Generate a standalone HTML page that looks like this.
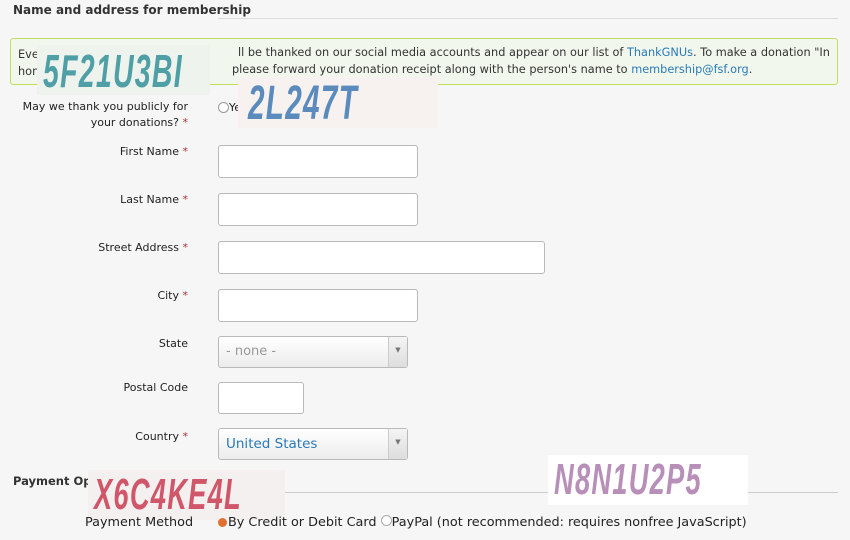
<!DOCTYPE html>
<html><head><meta charset="utf-8"><style>
body{margin:0;width:850px;height:540px;background:#f6f6f6;font-family:"DejaVu Sans","Liberation Sans",sans-serif;color:#222;overflow:hidden;position:relative}
.a{position:absolute}
.h{font-size:12px;font-weight:bold;color:#333}
.lbl{position:absolute;right:662px;font-size:11px;text-align:right;color:#222;line-height:16px}
.req{color:#a33}
.in{position:absolute;left:218px;height:31px;background:#fff;border:1px solid #b9b9b9;border-radius:3px}
.sel{position:absolute;left:218px;height:30px;border:1px solid #b9b9b9;border-radius:3px;background:linear-gradient(#fff,#ececec);font-size:13px;line-height:30px;padding-left:7px;box-sizing:border-box}
.sel b{position:absolute;right:0;top:0;width:18px;height:100%;border-left:1px solid #ccc;background:linear-gradient(#f4f4f4,#ddd);font-size:7px;color:#777;text-align:center;font-weight:normal;line-height:26px}
.cap{position:absolute;overflow:hidden}
.cap span{position:absolute;left:6px;top:3px;font-family:"Liberation Sans",sans-serif;font-weight:bold;font-style:italic;letter-spacing:2px;line-height:1;transform:scaleX(0.62);transform-origin:0 0;white-space:nowrap}
</style></head><body>
<div class="a h" style="left:13px;top:3px">Name and address for membership</div>
<div class="a" style="left:218px;top:18px;width:620px;height:1px;background:#ddd"></div>
<div class="a" style="left:10px;top:38px;width:826px;height:45px;border:1px solid #c4dd5a;border-radius:3px;background:#f1f7ec"></div>
<div class="a" style="left:18px;top:46px;font-size:11.3px;line-height:17px;color:#333;white-space:nowrap">Eve<br>hon</div>
<div class="a" style="left:238px;top:46px;font-size:11.3px;color:#333;white-space:nowrap">ll be thanked on our social media accounts and appear on our list of <span style="color:#2a7ab8">ThankGNUs</span>. To make a donation "In</div>
<div class="a" style="left:232px;top:63px;font-size:11.3px;color:#333;white-space:nowrap">please forward your donation receipt along with the person's name to <span style="color:#2a7ab8">membership@fsf.org</span>.</div>
<div class="cap" style="left:37px;top:45px;width:173px;height:50px;background:#eef3ee;color:#4e9fa6"><span style="font-size:46px">5F21U3BI</span></div>
<div class="lbl" style="top:99px">May we thank you publicly for<br>your donations? <span class="req">*</span></div>
<div class="a" style="left:218px;top:102px;width:9px;height:9px;border:1px solid #999;border-radius:50%;background:#fff"></div>
<div class="a" style="left:229px;top:101px;font-size:11px">Ye</div>
<div class="cap" style="left:238px;top:77px;width:200px;height:51px;background:#f7f2f0;color:#5b8bbd"><span style="font-size:48px;left:10px">2L247T</span></div>

<div class="lbl" style="top:144px">First Name <span class="req">*</span></div>
<div class="in" style="top:145px;width:198px"></div>
<div class="lbl" style="top:192px">Last Name <span class="req">*</span></div>
<div class="in" style="top:193px;width:198px"></div>
<div class="lbl" style="top:240px">Street Address <span class="req">*</span></div>
<div class="in" style="top:241px;width:325px"></div>
<div class="lbl" style="top:288px">City <span class="req">*</span></div>
<div class="in" style="top:289px;width:198px"></div>
<div class="lbl" style="top:336px">State</div>
<div class="sel" style="top:336px;width:190px;height:32px;color:#999">- none -<b>▼</b></div>
<div class="lbl" style="top:380px">Postal Code</div>
<div class="in" style="top:382px;width:84px;height:30px"></div>
<div class="lbl" style="top:429px">Country <span class="req">*</span></div>
<div class="sel" style="top:428px;width:190px;height:32px;color:#2a7ab8;font-size:13.5px">United States<b>▼</b></div>

<div class="a h" style="left:13px;top:474px;font-size:11.5px">Payment Opt</div>
<div class="a" style="left:285px;top:492px;width:553px;height:1px;background:#ccc"></div>
<div class="cap" style="left:88px;top:470px;width:197px;height:50px;background:#f4f0f0;color:#d0566a"><span style="font-size:44px">X6C4KE4L</span></div>
<div class="cap" style="left:548px;top:455px;width:200px;height:50px;background:#fff;color:#b78fb8"><span style="font-size:44px">N8N1U2P5</span></div>
<div class="a" style="left:85px;top:515px;font-size:12.8px;color:#222">Payment Method</div>
<div class="a" style="left:218px;top:518px;width:9px;height:9px;border-radius:50%;background:#e07030"></div>
<div class="a" style="left:228px;top:515px;font-size:12.8px;white-space:nowrap">By Credit or Debit Card <span style="display:inline-block;width:9px;height:9px;border:1px solid #aaa;border-radius:50%;background:#fff"></span>PayPal (not recommended: requires nonfree JavaScript)</div>
</body></html>
